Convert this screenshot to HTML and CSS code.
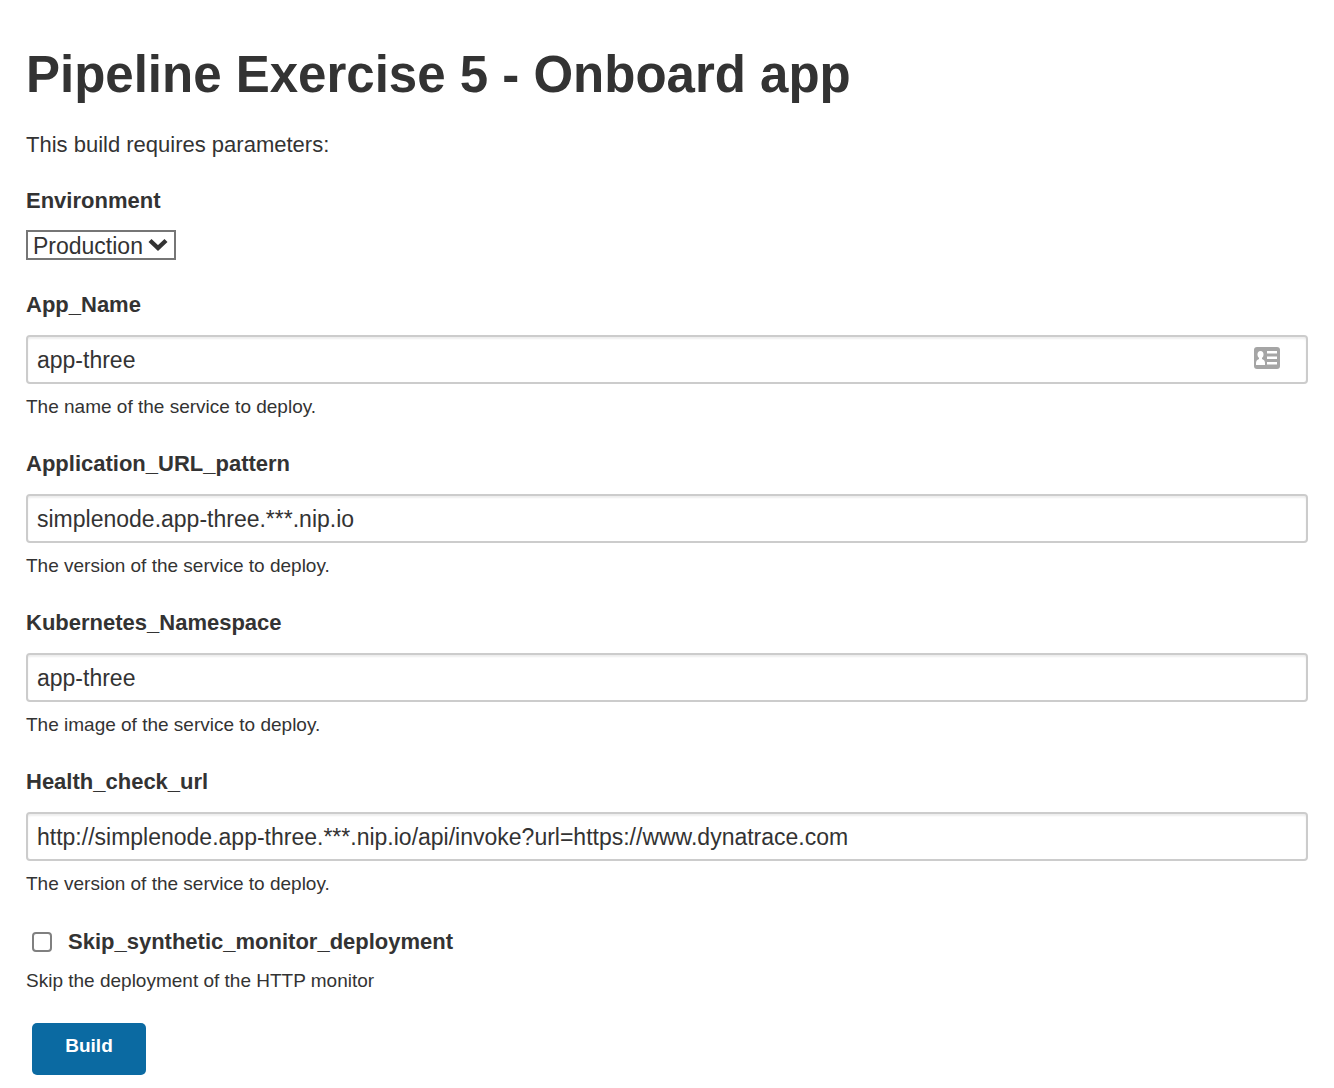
FILE: index.html
```
<!DOCTYPE html>
<html lang="en">
<head>
<meta charset="utf-8">
<title>Pipeline Exercise 5 - Onboard app</title>
<link rel="stylesheet" href="styles.css">
</head>
<body>
<main class="page">
  <h1 class="title">Pipeline Exercise 5 - Onboard app</h1>
  <p class="intro">This build requires parameters:</p>
  <form class="form">
    <div class="field">
      <label class="label" for="environment">Environment</label>
      <div class="select-wrap">
        <select class="select" id="environment"><option>Production</option></select>
        <svg class="chevron" viewBox="0 0 20 14" aria-hidden="true"><path d="M2 2.500l8 7.500 8-7.500" fill="none" stroke="#333" stroke-width="4.400"/></svg>
      </div>
    </div>
    <div class="field">
      <label class="label" for="app">App_Name</label>
      <div class="input-wrap">
        <input class="input" id="app" type="text" value="app-three">
        <svg class="card-icon" viewBox="0 0 26 22" aria-hidden="true"><rect width="26" height="22" rx="3" fill="#a5a5a5"/><ellipse cx="6.500" cy="7.500" rx="3" ry="3.500" fill="#fff"/><path d="M5 10h3v2q3 1 3 4v2H2v-2q0-3 3-4zM13 4h10v2.500H13zM13 9.500h10V12H13zM13 15h10v2.500H13z" fill="#fff"/></svg>
      </div>
      <p class="help">The name of the service to deploy.</p>
    </div>
    <div class="field">
      <label class="label" for="pattern">Application_URL_pattern</label>
      <input class="input" id="pattern" type="text" value="simplenode.app-three.***.nip.io">
      <p class="help">The version of the service to deploy.</p>
    </div>
    <div class="field">
      <label class="label" for="namespace">Kubernetes_Namespace</label>
      <input class="input" id="namespace" type="text" value="app-three">
      <p class="help">The image of the service to deploy.</p>
    </div>
    <div class="field">
      <label class="label" for="health">Health_check_url</label>
      <input class="input" id="health" type="text" value="http://simplenode.app-three.***.nip.io/api/invoke?url=https://www.dynatrace.com">
      <p class="help">The version of the service to deploy.</p>
    </div>
    <div class="field">
      <div class="check-row">
        <input class="check" id="skip" type="checkbox">
        <label class="label" for="skip">Skip_synthetic_monitor_deployment</label>
      </div>
      <p class="help">Skip the deployment of the HTTP monitor</p>
    </div>
    <button class="build" type="button">Build</button>
  </form>
</main>
</body>
</html>
```
FILE: styles.css
```
* { box-sizing: border-box; }
body {
  margin: 0;
  background: #fff;
  color: #333;
  font: 22px/30px "Liberation Sans", Arial, sans-serif;
}
.page { padding: 45px 26px 14px; }
.title { margin: 0; font-size: 51px; line-height: 60px; }
.intro { margin: 25px 0 26px; }
.form { display: flex; flex-direction: column; align-items: stretch; gap: 30px; }
.field { display: flex; flex-direction: column; }
.label { font-weight: 700; }
.select-wrap { position: relative; align-self: flex-start; margin-top: 14px; display: flex; }
.select {
  appearance: none;
  width: 150px;
  height: 30px;
  padding: 2px 5px 0;
  border: 2px solid #767676;
  border-radius: 0;
  background: #fff;
  color: #333;
  font: inherit;
  font-size: 23px;
  line-height: 24px;
}
.chevron { position: absolute; right: 8px; top: 8px; width: 20px; height: 14px; pointer-events: none; }
.input-wrap { position: relative; }
.input {
  width: 100%;
  height: 49px;
  margin-top: 15px;
  padding: 2px 9px 0;
  border: 2px solid #ccc;
  border-radius: 4px;
  box-shadow: inset 0 2px 2px rgba(0, 0, 0, 0.07);
  background: #fff;
  color: #333;
  font: inherit;
  font-size: 23px;
}
.card-icon { position: absolute; right: 28px; bottom: 15px; width: 26px; height: 22px; }
.help { margin: 11px 0 0; font-size: 19px; line-height: 24px; }
.check-row { display: flex; align-items: center; gap: 16px; padding-left: 6px; line-height: 32px; }
.check {
  appearance: none;
  width: 20px;
  height: 20px;
  margin: 0;
  border: 2px solid #808080;
  border-radius: 4px;
  background: #fff;
}
.build {
  align-self: flex-start;
  width: 114px;
  height: 52px;
  margin-left: 6px;
  padding: 0 0 6px;
  border: 0;
  border-radius: 5px;
  background: #0b6aa2;
  color: #fff;
  font: 700 19px/26px "Liberation Sans", Arial, sans-serif;
}
```
